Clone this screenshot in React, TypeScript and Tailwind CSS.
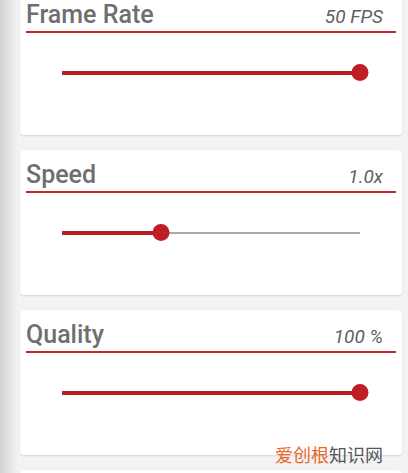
const settings = [
  { title: "Frame Rate", value: "50 FPS", pct: 100 },
  { title: "Speed", value: "1.0x", pct: 33.2 },
  { title: "Quality", value: "100 %", pct: 100 },
];

const Slider = ({ pct }: { pct: number }) => (
  <div className="relative mx-[36px] h-[18px]">
    <div className="absolute left-0 right-0 top-[8px] h-[1.5px] bg-[#a9a9a9]" />
    <div
      className="absolute left-0 top-[7px] h-[4px] bg-[#b71f24]"
      style={{ width: `${pct}%` }}
    />
    <div
      className="absolute top-0 h-[17px] w-[17px] -translate-x-1/2 rounded-full bg-[#bf1f24]"
      style={{ left: `${pct}%` }}
    />
  </div>
);

const SettingCard = ({ title, value, pct }: { title: string; value: string; pct: number }) => (
  <div className="h-[145px] w-[382px] shrink-0 rounded-[4px] bg-white px-[6px] pt-[12px] shadow-[0_1px_2px_rgba(0,0,0,0.12)]">
    <div className="flex items-baseline justify-between border-b-[2.5px] border-[#c0282d] pb-[2px]">
      <span className="text-[25px] font-medium leading-[25px] text-[#6f6f6f]">{title}</span>
      <span className="pr-[13px] text-[19px] italic leading-[25px] text-[#5f5f5f]">{value}</span>
    </div>
    <div className="mt-[31px]">
      <Slider pct={pct} />
    </div>
  </div>
);

export default function App() {
  return (
    <div className="relative flex h-[473px] w-[408px] overflow-hidden bg-[#f3f3f3] font-['Roboto',sans-serif]">
      <div className="w-[18px] shrink-0 bg-gradient-to-r from-[#d2d2d2] to-[#f3f3f3]" />
      <div className="-mt-[10px] ml-[2px] flex flex-col gap-[15px]">
        {settings.map((s) => (
          <SettingCard key={s.title} {...s} />
        ))}
        <div className="h-[145px] w-[382px] shrink-0 rounded-[4px] bg-white shadow-[0_1px_2px_rgba(0,0,0,0.12)]" />
      </div>
      <div className="absolute left-[275px] top-[445px] text-[18px] leading-none font-['Noto_Sans_CJK_SC',sans-serif]">
        <span className="text-[#e8692b]">爱创根</span>
        <span className="text-[#555555]">知识网</span>
      </div>
    </div>
  );
}
